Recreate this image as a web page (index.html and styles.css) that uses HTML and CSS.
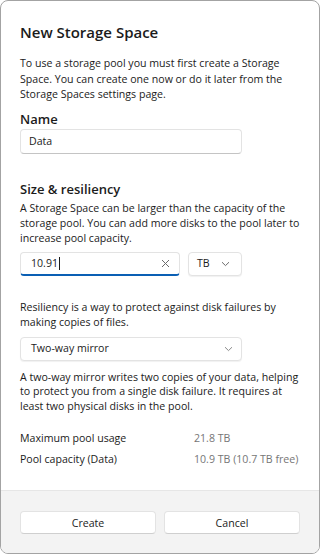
FILE: index.html
```html
<!DOCTYPE html>
<html lang="en">
<head>
    <meta charset="UTF-8">
    <meta name="viewport" content="width=device-width, initial-scale=1.0">
    <title>New Storage Space</title>
    <link rel="stylesheet" href="styles.css">
</head>
<body>
    <div class="dialog">
        <div class="content">
            <h1 class="title">New Storage Space</h1>
            <p class="text intro">To use a storage pool you must first create a Storage Space. You can create one now or do it later from the Storage Spaces settings page.</p>

            <h2 class="section name-head">Name</h2>
            <div class="field name-field">Data</div>

            <h2 class="section size-head">Size &amp; resiliency</h2>
            <p class="text size-text">A Storage Space can be larger than the capacity of the storage pool. You can add more disks to the pool later to increase pool capacity.</p>

            <div class="size-row">
                <div class="field size-field">
                    <span class="value">10.91<span class="caret"></span></span>
                    <svg class="clear" width="9" height="9" viewBox="0 0 9 9">
                        <path d="M1 1 L8 8 M8 1 L1 8" stroke="#6b6b6b" stroke-width="1" fill="none"/>
                    </svg>
                </div>
                <div class="field select unit-select">
                    <span>TB</span>
                    <svg class="chevron" width="9" height="6" viewBox="0 0 9 6">
                        <path d="M1 1.2 L4.5 4.6 L8 1.2" stroke="#6b6b6b" stroke-width="1" fill="none"/>
                    </svg>
                </div>
            </div>

            <p class="text resiliency-text">Resiliency is a way to protect against disk failures by making copies of files.</p>
            <div class="field select mirror-select">
                <span>Two-way mirror</span>
                <svg class="chevron" width="9" height="6" viewBox="0 0 9 6">
                    <path d="M1 1.2 L4.5 4.6 L8 1.2" stroke="#8a8a8a" stroke-width="1" fill="none"/>
                </svg>
            </div>
            <p class="text mirror-text">A two-way mirror writes two copies of your data, helping to protect you from a single disk failure. It requires at least two physical disks in the pool.</p>

            <div class="stats">
                <div class="stat-label">Maximum pool usage</div>
                <div class="stat-value">21.8 TB</div>
                <div class="stat-label">Pool capacity (Data)</div>
                <div class="stat-value">10.9 TB (10.7 TB free)</div>
            </div>
        </div>

        <div class="footer">
            <button class="btn">Create</button>
            <button class="btn">Cancel</button>
        </div>
    </div>
</body>
</html>
```

FILE: styles.css
```css
body {
    margin: 0;
    padding: 0;
    background-color: #fff;
    font-family: "Open Sans", "Noto Sans", sans-serif;
    color: #1b1b1b;
}

.dialog {
    width: 320px;
    height: 554px;
    box-sizing: border-box;
    border: 1px solid #a3a3a3;
    border-radius: 8px;
    overflow: hidden;
    display: flex;
    flex-direction: column;
    background-color: #fff;
}

.content {
    flex: 1;
    padding: 21px 19px 0 19px;
}

.title {
    margin: 0;
    font-size: 15px;
    line-height: 20px;
    font-weight: 600;
}

.text {
    margin: 0;
    font-size: 10.6px;
    line-height: 15.5px;
}

.intro {
    margin-top: 14px;
}

.section {
    margin: 0;
    font-size: 13px;
    line-height: 18px;
    font-weight: 600;
}

.name-head {
    margin-top: 7px;
}

.field {
    box-sizing: border-box;
    height: 25px;
    border: 1px solid #e3e3e3;
    border-bottom-color: #c4c4c4;
    border-radius: 4px;
    background-color: #fff;
    font-size: 10.6px;
    line-height: 23px;
    padding: 0 8px;
}

.name-field {
    margin-top: 1px;
    width: 222px;
}

.size-head {
    margin-top: 26px;
}

.size-text {
    margin-top: 3px;
    line-height: 15px;
}

.size-row {
    display: flex;
    gap: 8px;
    margin-top: 6px;
}

.size-field {
    width: 160px;
    height: 24px;
    display: flex;
    align-items: center;
    justify-content: space-between;
    border-bottom: 2px solid #0a5fb4;
    padding-left: 10px;
    padding-right: 9px;
}

.value {
    display: flex;
    align-items: center;
}

.caret {
    display: inline-block;
    width: 1px;
    height: 13px;
    background-color: #1b1b1b;
    margin-left: 1px;
}

.select {
    height: 24px;
    display: flex;
    align-items: center;
    justify-content: space-between;
    border-bottom-color: #e3e3e3;
    box-shadow: 0 1px 1px rgba(0, 0, 0, 0.06);
}

.unit-select {
    width: 54px;
    padding-right: 11px;
}

.resiliency-text {
    margin-top: 24px;
}

.mirror-select {
    margin-top: 6px;
    width: 222px;
    padding-left: 10px;
    padding-right: 8px;
}

.mirror-text {
    margin-top: 9px;
    line-height: 14.5px;
}

.stats {
    display: grid;
    grid-template-columns: 174px 1fr;
    margin-top: 15px;
    font-size: 10.6px;
    line-height: 21px;
}

.stat-value {
    color: #767676;
}

.footer {
    height: 63px;
    box-sizing: border-box;
    background-color: #f3f3f3;
    border-top: 1px solid #e6e6e6;
    display: grid;
    grid-template-columns: 1fr 1fr;
    gap: 8px;
    padding: 20px 19px 0 19px;
    align-items: start;
}

.btn {
    height: 23px;
    background-color: #fff;
    border: 1px solid #e3e3e3;
    border-bottom-color: #cfcfcf;
    border-radius: 4px;
    font-family: "Open Sans", "Noto Sans", sans-serif;
    font-size: 10.6px;
    color: #1b1b1b;
    padding: 0;
}
```
